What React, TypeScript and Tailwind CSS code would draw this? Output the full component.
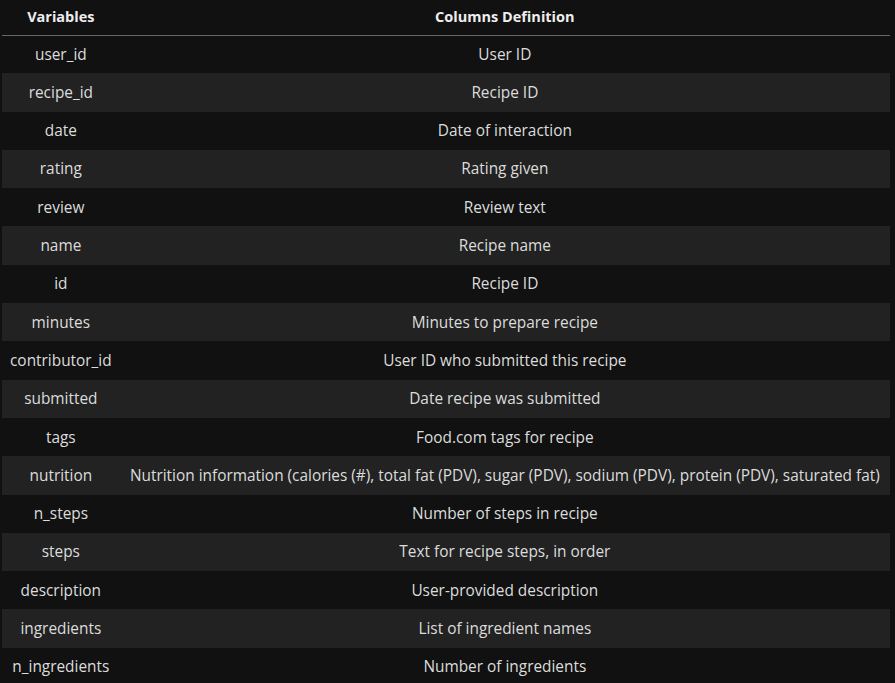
const rows: [string, string][] = [
  ['user_id', 'User ID'],
  ['recipe_id', 'Recipe ID'],
  ['date', 'Date of interaction'],
  ['rating', 'Rating given'],
  ['review', 'Review text'],
  ['name', 'Recipe name'],
  ['id', 'Recipe ID'],
  ['minutes', 'Minutes to prepare recipe'],
  ['contributor_id', 'User ID who submitted this recipe'],
  ['submitted', 'Date recipe was submitted'],
  ['tags', 'Food.com tags for recipe'],
  ['nutrition', 'Nutrition information (calories (#), total fat (PDV), sugar (PDV), sodium (PDV), protein (PDV), saturated fat)'],
  ['n_steps', 'Number of steps in recipe'],
  ['steps', 'Text for recipe steps, in order'],
  ['description', 'User-provided description'],
  ['ingredients', 'List of ingredient names'],
  ['n_ingredients', 'Number of ingredients'],
]

export default function App() {
  return (
    <div className="min-h-screen bg-[#111111] text-[#dcdcdc] font-['Open_Sans',sans-serif] text-[15.4px] pl-[2px] pr-[5px]">
      <table className="w-full border-collapse">
        <thead>
          <tr className="h-[35px] border-b border-[#666666]">
            <th className="w-[116px] text-[14.5px] font-bold text-[#eeeeee] text-center">Variables</th>
            <th className="text-[14.5px] font-bold text-[#eeeeee] text-center">Columns Definition</th>
          </tr>
        </thead>
        <tbody>
          {rows.map(([v, d], i) => (
            <tr key={v} className={`h-[38.3px] ${i % 2 === 1 ? 'bg-[#222222]' : ''}`}>
              <td className="text-center px-2 whitespace-nowrap">{v}</td>
              <td className="text-center px-2 whitespace-nowrap">{d}</td>
            </tr>
          ))}
        </tbody>
      </table>
    </div>
  )
}
